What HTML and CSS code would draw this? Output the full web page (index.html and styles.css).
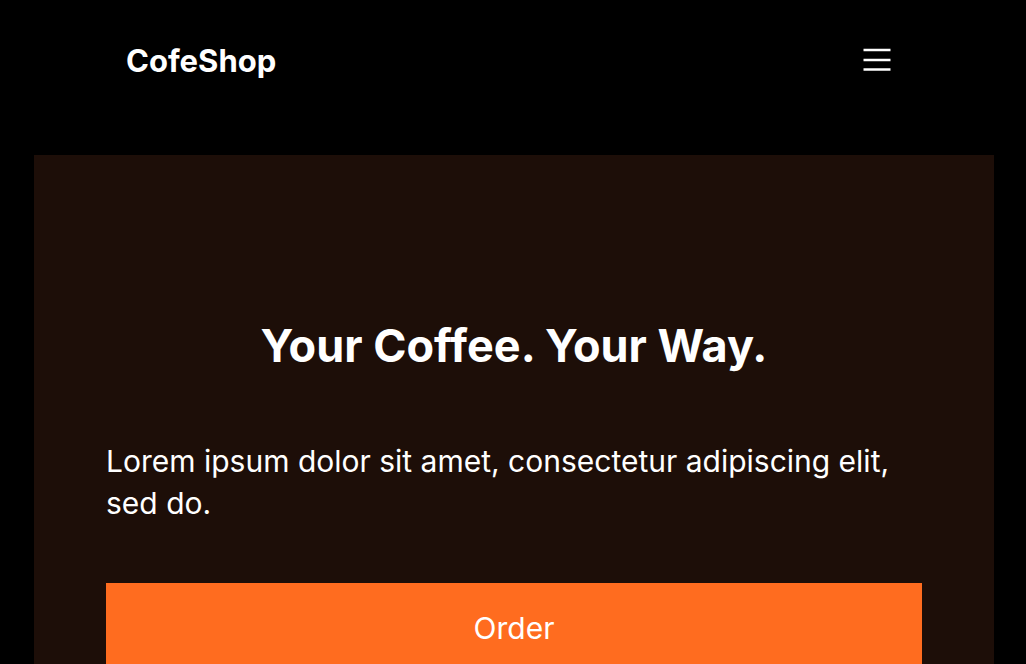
FILE: index.html
```html
<!DOCTYPE html>
<html lang="en">
<head>
<meta charset="utf-8">
<title>CofeShop</title>
<link rel="stylesheet" href="styles.css">
</head>
<body>
<header class="site-header">
  <div class="logo">CofeShop</div>
  <button class="menu-btn" aria-label="Menu">
    <svg width="28" height="24" viewBox="0 0 28 24" fill="none" stroke="#fff" stroke-width="2.5" stroke-linecap="butt">
      <line x1="0.5" y1="2" x2="27.5" y2="2"/>
      <line x1="0.5" y1="12" x2="27.5" y2="12"/>
      <line x1="0.5" y1="21.5" x2="27.5" y2="21.5"/>
    </svg>
  </button>
</header>
<main class="page">
  <section class="hero">
    <h1 class="hero-title">Your Coffee. Your Way.</h1>
    <p class="hero-text">Lorem ipsum dolor sit amet, consectetur adipiscing elit, sed do.</p>
    <button class="order-btn">Order</button>
  </section>
</main>
</body>
</html>
```

FILE: styles.css
```css
* { box-sizing: border-box; }
html, body { margin: 0; padding: 0; }
body {
  background: #000;
  color: #fff;
  font-family: Inter, "Noto Sans", sans-serif;
}
.site-header {
  display: flex;
  align-items: center;
  justify-content: space-between;
  height: 120px;
  padding: 0 135px 0 126px;
}
.logo {
  font-size: 31px;
  font-weight: 700;
  letter-spacing: 0;
}
.menu-btn {
  background: none;
  border: 0;
  padding: 0;
  display: flex;
  cursor: pointer;
}
.page {
  padding: 35px 32px 0 34px;
}
.hero {
  background: #1d0e08;
  padding: 164px 72px 0;
  display: flex;
  flex-direction: column;
  min-height: 520px;
}
.hero-title {
  margin: 0;
  text-align: center;
  font-size: 45px;
  font-weight: 700;
  line-height: 54px;
}
.hero-text {
  margin: 67px 0 0;
  font-size: 30px;
  line-height: 42px;
}
.order-btn {
  margin-top: 59px;
  background: #ff6c1f;
  color: #fff;
  border: 0;
  height: 90px;
  font-family: inherit;
  font-size: 30px;
}
```
